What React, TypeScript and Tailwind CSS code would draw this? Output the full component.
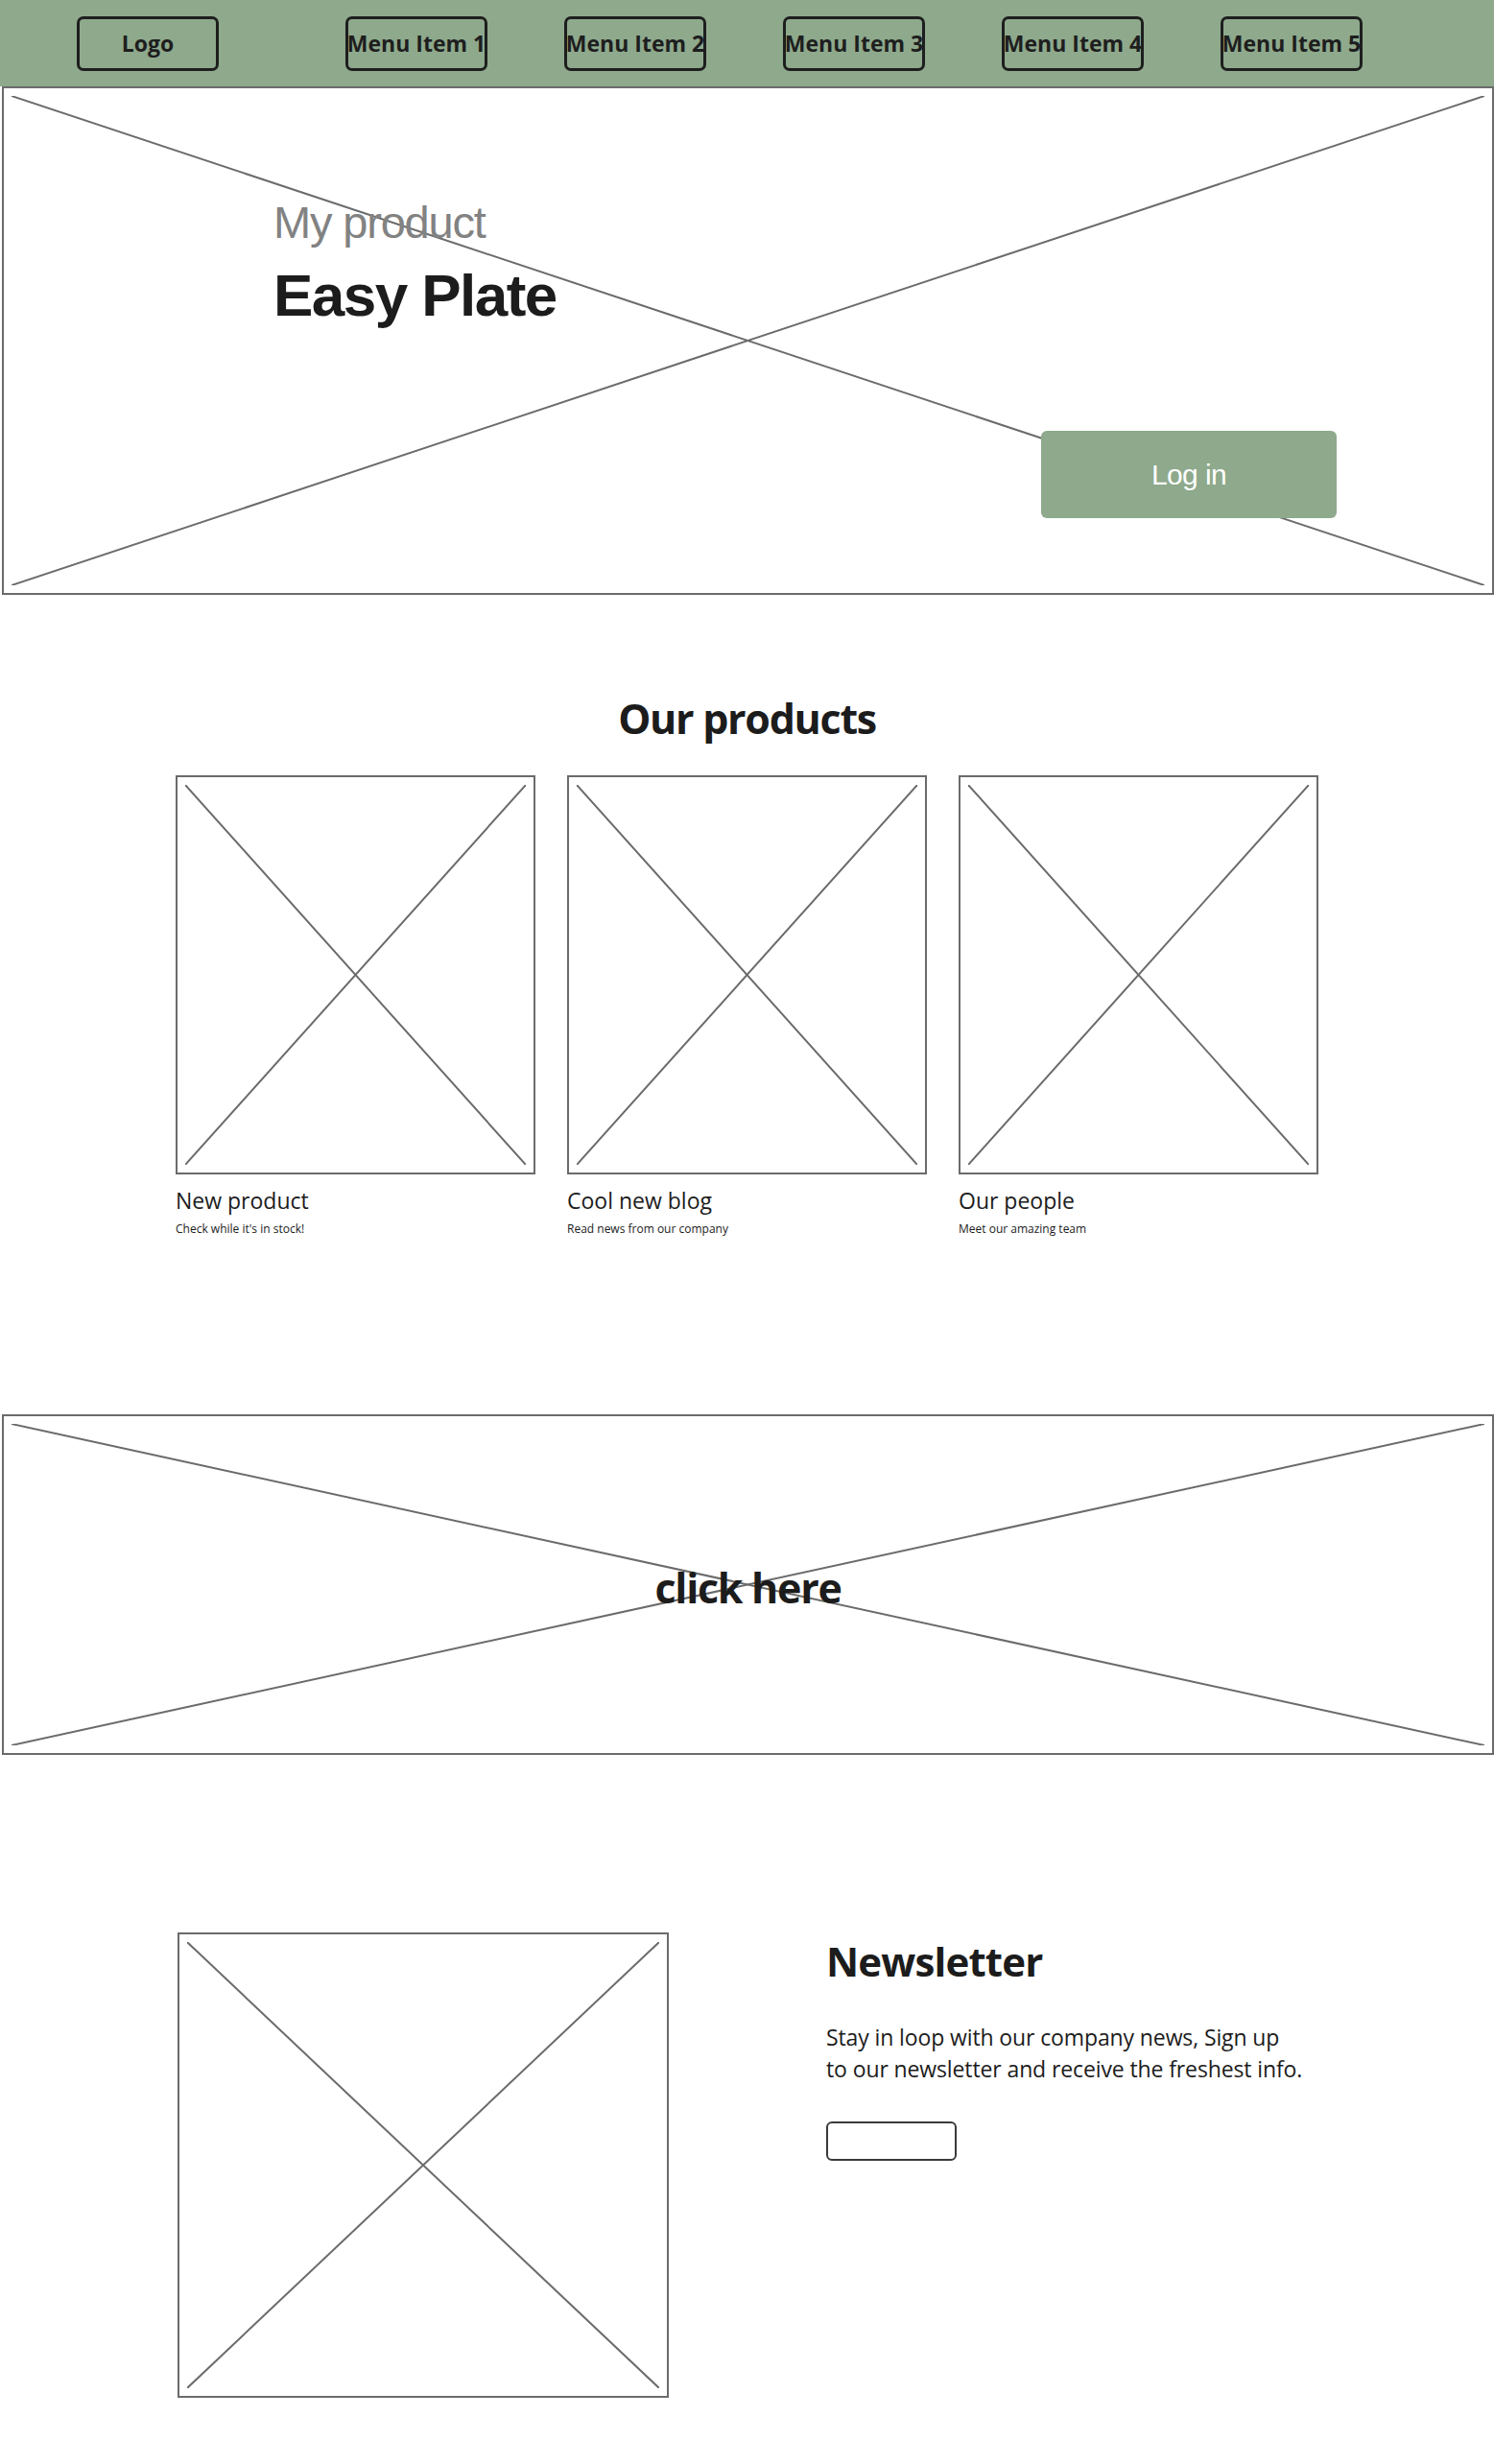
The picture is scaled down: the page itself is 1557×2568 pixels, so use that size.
import type { ReactNode } from "react"
import clsx from "clsx"

const MENU = ["Menu Item 1", "Menu Item 2", "Menu Item 3", "Menu Item 4", "Menu Item 5"]

const PRODUCTS = [
  { title: "New product", sub: "Check while it's in stock!" },
  { title: "Cool new blog", sub: "Read news from our company" },
  { title: "Our people", sub: "Meet our amazing team" },
]

// wireframe image placeholder: grey frame with an X across it
function Placeholder({ className, children }: { className?: string; children?: ReactNode }) {
  return (
    <div className={clsx("relative border-2 border-[#6b6b6b] bg-white", className)}>
      <svg
        className="absolute left-[8px] top-[8px] h-[calc(100%-16px)] w-[calc(100%-16px)]"
        viewBox="0 0 100 100"
        preserveAspectRatio="none"
      >
        <line x1="0" y1="0" x2="100" y2="100" stroke="#6b6b6b" strokeWidth="2" vectorEffect="non-scaling-stroke" />
        <line x1="100" y1="0" x2="0" y2="100" stroke="#6b6b6b" strokeWidth="2" vectorEffect="non-scaling-stroke" />
      </svg>
      {children}
    </div>
  )
}

function NavButton({ label }: { label: string }) {
  return (
    <div className="flex h-[57px] w-[148px] items-center justify-center whitespace-nowrap rounded-[7px] border-[3px] border-[#1e1e1e] text-[23px] font-bold text-[#1e1e1e]">
      {label}
    </div>
  )
}

export default function App() {
  return (
    <div className="min-h-[2568px] w-full bg-white font-['Open_Sans',sans-serif] text-[#1c1c1c]">
      {/* Nav */}
      <nav className="flex h-[90px] items-center bg-[#8ea98c] pl-[80px]">
        <NavButton label="Logo" />
        <div className="ml-[132px] flex gap-[80px]">
          {MENU.map((m) => (
            <NavButton key={m} label={m} />
          ))}
        </div>
      </nav>

      {/* Hero */}
      <Placeholder className="ml-[2px]">
        <div className="relative flex flex-col pb-[78px] pl-[281px] pr-[162px] pt-[116px] font-['Liberation_Sans',Arial,sans-serif]">
          <div className="text-[47px] leading-none tracking-[-0.025em] text-[#828282]">My product</div>
          <div className="mt-[22px] text-[62px] font-bold leading-none tracking-[-0.025em] text-[#1c1c1c]">
            Easy Plate
          </div>
          <div className="mt-[110px] flex justify-end">
            <button className="flex h-[91px] w-[308px] items-center justify-center rounded-[6px] bg-[#8ea98c] text-[30px] tracking-[-0.02em] text-white">
              Log in
            </button>
          </div>
        </div>
      </Placeholder>

      {/* Products */}
      <section className="flex flex-col items-center pb-[185px] pt-[104px]">
        <h2 className="text-[43px] font-bold leading-[50px] tracking-[-0.03em]">Our products</h2>
        <div className="mt-[34px] flex gap-[33px]">
          {PRODUCTS.map((p) => (
            <div key={p.title} className="w-[375px]">
              <Placeholder className="h-[416px]" />
              <div className="mt-[11px] text-[23px] leading-[32px]">{p.title}</div>
              <div className="mt-[6px] text-[12px] leading-[16px]">{p.sub}</div>
            </div>
          ))}
        </div>
      </section>

      {/* Banner */}
      <Placeholder className="ml-[2px] flex h-[355px] items-center justify-center">
        <span className="relative mt-[6px] text-[43px] font-bold leading-none tracking-[-0.03em]">click here</span>
      </Placeholder>

      {/* Newsletter */}
      <section className="flex gap-[164px] pb-[68px] pl-[185px] pt-[185px]">
        <Placeholder className="h-[485px] w-[512px]" />
        <div className="mt-[5px] flex flex-col">
          <h2 className="text-[42px] font-bold leading-[50px] tracking-[-0.02em]">Newsletter</h2>
          <p className="mt-[38px] text-[23px] leading-[33px] tracking-[-0.005em]">
            Stay in loop with our company news, Sign up
            <br />
            to our newsletter and receive the freshest info.
          </p>
          <div className="mt-[38px] h-[41px] w-[136px] rounded-[6px] border-2 border-[#3a3a3a]" />
        </div>
      </section>
    </div>
  )
}
